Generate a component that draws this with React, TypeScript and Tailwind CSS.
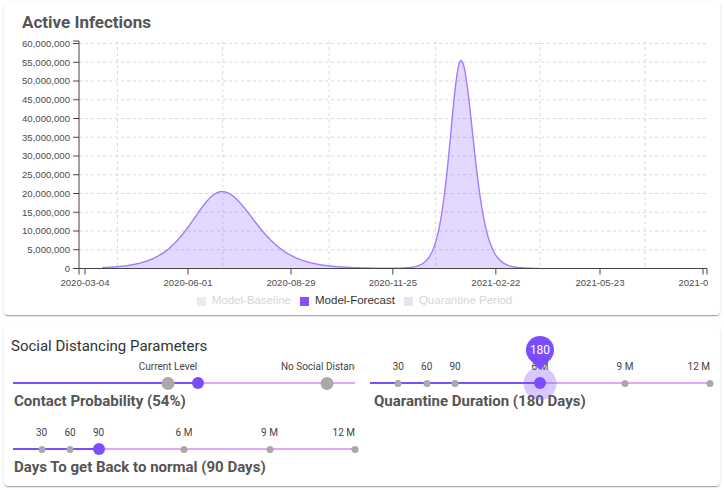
import React from 'react'

const PURPLE = '#7c4dff'
const LILAC = '#e1a6f8'

// chart geometry is in page pixels: the svg viewBox is lined up with the page
const X0 = 85
const PX_DAY = 103 / 89
const Y0 = 268.5
const PX_5M = 18.75
const dayX = (d: number) => X0 + d * PX_DAY
const valY = (v: number) => Y0 - (v / 5e6) * PX_5M

function sech2(u: number) {
  const c = Math.cosh(u)
  return 1 / (c * c)
}

function infections(x: number) {
  const first = 20.5e6 * sech2((x - 222) / (x < 222 ? 41 : 45))
  const second = 55.5e6 * sech2((x - 461) / (x < 461 ? 15 : 17))
  return first + second
}

const X_TICKS: [number, string][] = [
  [0, '2020-03-04'],
  [89, '2020-06-01'],
  [178, '2020-08-29'],
  [266, '2020-11-25'],
  [355, '2021-02-22'],
  [445, '2021-05-23'],
  [534, '2021-08-20'],
]
const MONTH_GRID = [28, 119, 211, 303, 393, 484]
const Y_TICKS = Array.from({ length: 13 }, (_, i) => i * 5e6)

function InfectionsChart() {
  const pts: [number, number][] = []
  for (let x = 102; x <= 540; x++) pts.push([x, valY(infections(x))])
  const line = pts.map(([x, y], i) => `${i ? 'L' : 'M'}${x},${y.toFixed(2)}`).join(' ')
  const area = `${line} L540,${Y0} L102,${Y0} Z`

  return (
    <svg width={704} height={256} viewBox="4 34 704 256" className="block" style={{ fontFamily: '"Liberation Sans", Arial, sans-serif' }}>
      {/* grid */}
      {Y_TICKS.slice(1).map(v => (
        <line key={v} x1={79} x2={707} y1={valY(v)} y2={valY(v)} stroke="#d9d9d9" strokeDasharray="3 3" />
      ))}
      {MONTH_GRID.map(d => (
        <line key={d} x1={dayX(d)} x2={dayX(d)} y1={41} y2={Y0} stroke="#d9d9d9" strokeDasharray="3 3" />
      ))}

      <path d={area} fill="rgba(140,92,255,0.24)" />
      <path d={line} fill="none" stroke="#a47bff" strokeWidth={1.4} />

      {/* y axis */}
      <path d={`M73,41 H79 V${Y0} H73`} fill="none" stroke="#444" />
      {Y_TICKS.map(v => (
        <g key={v}>
          <line x1={73} x2={79} y1={valY(v)} y2={valY(v)} stroke="#444" />
          <text x={70} y={valY(v) + 3.4} textAnchor="end" fontSize={9.6} fill="#4d4d4d">
            {v.toLocaleString('en-US')}
          </text>
        </g>
      ))}

      {/* x axis */}
      <path d={`M79,${Y0 + 6} V${Y0} H707 V${Y0 + 6}`} fill="none" stroke="#444" />
      {X_TICKS.map(([d, label]) => (
        <g key={label}>
          <line x1={dayX(d)} x2={dayX(d)} y1={Y0} y2={Y0 + 6} stroke="#444" />
          <text x={dayX(d)} y={Y0 + 17} textAnchor="middle" fontSize={9.6} fill="#4d4d4d">
            {label}
          </text>
        </g>
      ))}
    </svg>
  )
}

function LegendItem({ box, text, label }: { box: string; text: string; label: string }) {
  return (
    <div className="flex items-center gap-[6px]">
      <span className={`w-[9px] h-[9px] ${box}`} />
      <span className={text}>{label}</span>
    </div>
  )
}

type Mark = { at: number; label: string; align?: 'center' | 'end' }

interface SliderProps {
  value: number // 0..1
  marks: Mark[]
  bigMarks?: boolean
  halo?: boolean
  bubble?: string
  clip?: boolean
}

function Slider({ value, marks, bigMarks, halo, bubble, clip }: SliderProps) {
  const pct = (v: number) => `${v * 100}%`
  return (
    <div className={`relative h-[31px] ${clip ? 'overflow-x-clip' : ''}`}>
      {/* mark labels */}
      {marks.map(m => (
        <span
          key={m.label}
          className={`absolute top-[1px] text-[10px] leading-[12px] text-[#444] whitespace-nowrap ${
            m.align === 'end' ? '-translate-x-full' : '-translate-x-1/2'
          }`}
          style={{ left: pct(m.at) }}
        >
          {m.label}
        </span>
      ))}

      {/* track */}
      <div className="absolute left-0 right-0 top-[22px] h-[2px]" style={{ background: LILAC }} />
      <div className="absolute left-0 top-[22px] h-[2px]" style={{ width: pct(value), background: PURPLE }} />

      {/* marks */}
      {marks.map(m => (
        <span
          key={m.label + '-dot'}
          className={`absolute rounded-full bg-[#a9a9a9] -translate-x-1/2 ${
            bigMarks ? 'w-[13px] h-[13px] top-[16.5px]' : 'w-[7px] h-[7px] top-[19.5px]'
          }`}
          style={{ left: pct(m.at) }}
        />
      ))}

      {halo && (
        <span
          className="absolute w-[33px] h-[33px] top-[6.5px] rounded-full bg-[rgba(124,77,255,0.3)] -translate-x-1/2"
          style={{ left: pct(value) }}
        />
      )}

      {/* thumb */}
      <span
        className="absolute w-[12px] h-[12px] top-[17px] rounded-full -translate-x-1/2"
        style={{ left: pct(value), background: PURPLE }}
      />

      {bubble && (
        <div className="absolute top-[-25px] -translate-x-1/2" style={{ left: pct(value) }}>
          <div className="relative w-[30px] h-[30px]">
            <div className="absolute inset-[1px] rotate-[-45deg] rounded-[50%_50%_50%_0]" style={{ background: PURPLE }} />
            <span className="absolute inset-0 flex items-center justify-center text-white text-[12px]">{bubble}</span>
          </div>
        </div>
      )}
    </div>
  )
}

const DAY_MARKS: Mark[] = [
  { at: 30 / 360, label: '30' },
  { at: 60 / 360, label: '60' },
  { at: 90 / 360, label: '90' },
  { at: 180 / 360, label: '6 M' },
  { at: 270 / 360, label: '9 M' },
  { at: 1, label: '12 M', align: 'end' },
]

export default function App() {
  return (
    <div className="w-[724px] h-[490px] bg-white overflow-hidden pt-[2px] px-[4px]" style={{ fontFamily: 'Roboto, "Liberation Sans", Arial, sans-serif' }}>
      {/* Active infections card */}
      <div className="h-[313px] bg-white rounded-[4px] shadow-[0_2px_1px_-1px_rgba(0,0,0,0.2),0_1px_1px_0_rgba(0,0,0,0.14),0_1px_3px_0_rgba(0,0,0,0.12)]">
        <h1 className="pt-[8px] pl-[18px] text-[17px] leading-[24px] font-bold text-[#555]">Active Infections</h1>
        <InfectionsChart />
        <div
          className="h-[22px] flex items-center justify-center gap-[9px] pr-[15px] text-[11.5px]"
          style={{ fontFamily: '"Liberation Sans", Arial, sans-serif' }}
        >
          <LegendItem box="bg-[#ececec]" text="text-[#d6d6d6]" label="Model-Baseline" />
          <LegendItem box="bg-[#8a4dff]" text="text-[#333]" label="Model-Forecast" />
          <LegendItem box="bg-[#e3e5f1]" text="text-[#d6d6d6]" label="Quarantine Period" />
        </div>
      </div>

      {/* Social distancing card */}
      <div className="mt-[12px] h-[159px] bg-white rounded-[4px] pt-[9px] pl-[7px] shadow-[0_2px_1px_-1px_rgba(0,0,0,0.2),0_1px_1px_0_rgba(0,0,0,0.14),0_1px_3px_0_rgba(0,0,0,0.12)]">
        <h2 className="text-[15px] leading-[20px] text-[#333]">Social Distancing Parameters</h2>
        <div className="ml-[2px] mt-[4px] grid grid-cols-[342px_340px] gap-x-[15px] gap-y-[15px]">
          <div>
            <Slider
              value={0.54}
              bigMarks
              clip
              marks={[
                { at: 155 / 342, label: 'Current Level' },
                { at: 314 / 342, label: 'No Social Distancing' },
              ]}
            />
            <p className="ml-[1px] text-[15px] leading-[20px] font-bold text-[#555]">Contact Probability (54%)</p>
          </div>
          <div>
            <Slider value={0.5} marks={DAY_MARKS} halo bubble="180" />
            <p className="ml-[4px] text-[15px] leading-[20px] font-bold text-[#555]">Quarantine Duration (180 Days)</p>
          </div>
          <div>
            <Slider value={0.25} marks={DAY_MARKS} />
            <p className="ml-[1px] text-[15px] leading-[20px] font-bold text-[#555]">Days To get Back to normal (90 Days)</p>
          </div>
        </div>
      </div>
    </div>
  )
}
